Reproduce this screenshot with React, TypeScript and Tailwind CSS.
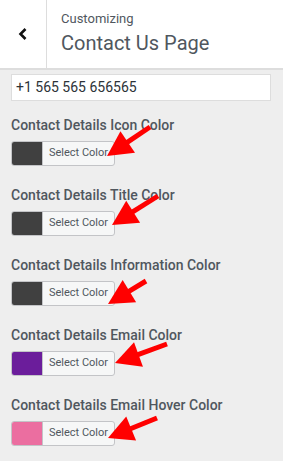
import React from "react";

type Pt = [number, number];

function Arrow({ tip, tail }: { tip: Pt; tail: Pt }) {
  const dx = tail[0] - tip[0];
  const dy = tail[1] - tip[1];
  const len = Math.hypot(dx, dy);
  const ux = dx / len;
  const uy = dy / len;
  const px = -uy;
  const py = ux;
  const hl = 25;
  const hw = 13;
  const bx = tip[0] + ux * hl;
  const by = tip[1] + uy * hl;
  const pts = [
    `${tip[0]},${tip[1]}`,
    `${bx + px * hw},${by + py * hw}`,
    `${bx - px * hw},${by - py * hw}`,
  ].join(" ");
  return (
    <g>
      <line x1={bx - ux * 2} y1={by - uy * 2} x2={tail[0]} y2={tail[1]} stroke="#ff0000" strokeWidth={5} strokeLinecap="butt" />
      <polygon points={pts} fill="#ff0000" />
    </g>
  );
}

const items = [
  { label: "Contact Details Icon Color", color: "bg-[#404040]" },
  { label: "Contact Details Title Color", color: "bg-[#404040]" },
  { label: "Contact Details Information Color", color: "bg-[#404040]" },
  { label: "Contact Details Email Color", color: "bg-[#6b1d9b]" },
  { label: "Contact Details Email Hover Color", color: "bg-[#eb6ea0]" },
];

export default function App() {
  return (
    <div className="relative w-[283px] h-[461px] overflow-hidden bg-[#eeeeee] font-['Roboto',sans-serif]">
      <div className="flex h-[70px] bg-white border-b-2 border-[#dddddd]">
        <div className="w-[47px] flex items-center justify-center border-r border-[#dddddd]">
          <svg width="12" height="14" viewBox="0 0 12 14">
            <path d="M8.5 2 L3.5 7 L8.5 12" fill="none" stroke="#111" strokeWidth="2.6" />
          </svg>
        </div>
        <div className="flex flex-col pl-[14px] pt-[10px]">
          <span className="text-[13px] leading-[18px] text-[#50575e]">Customizing</span>
          <span className="text-[20px] leading-[26px] mt-[2px] text-[#50575e]">Contact Us Page</span>
        </div>
      </div>
      <div className="px-[11px] pt-[4px]">
        <div className="h-[27px] w-[260px] bg-white border border-[#dddddd] flex items-center pl-[4px] text-[14px] text-[#2c3338]">
          +1 565 565 656565
        </div>
        <div className="flex flex-col pt-[14px]">
          {items.map((it) => (
            <div key={it.label} className="flex flex-col h-[70px]">
              <span className="text-[14px] leading-[20px] font-medium text-[#50575e]">{it.label}</span>
              <div className="mt-[6px] flex h-[25px] w-[104px] border border-[#c3c4c7] rounded-[3px] overflow-hidden bg-[#f6f7f7]">
                <div className={`w-[30px] h-full ${it.color}`} />
                <div className="flex-1 flex items-center justify-center text-[11px] text-[#50575e] border-l border-[#c3c4c7]">
                  Select Color
                </div>
              </div>
            </div>
          ))}
        </div>
      </div>
      <svg className="absolute inset-0 pointer-events-none" width="283" height="461">
        <Arrow tip={[107, 156]} tail={[150, 127]} />
        <Arrow tip={[112, 225]} tail={[158, 196]} />
        <Arrow tip={[108, 304]} tail={[146, 281]} />
        <Arrow tip={[115, 363]} tail={[167, 344]} />
        <Arrow tip={[108, 438]} tail={[157, 418]} />
      </svg>
    </div>
  );
}
